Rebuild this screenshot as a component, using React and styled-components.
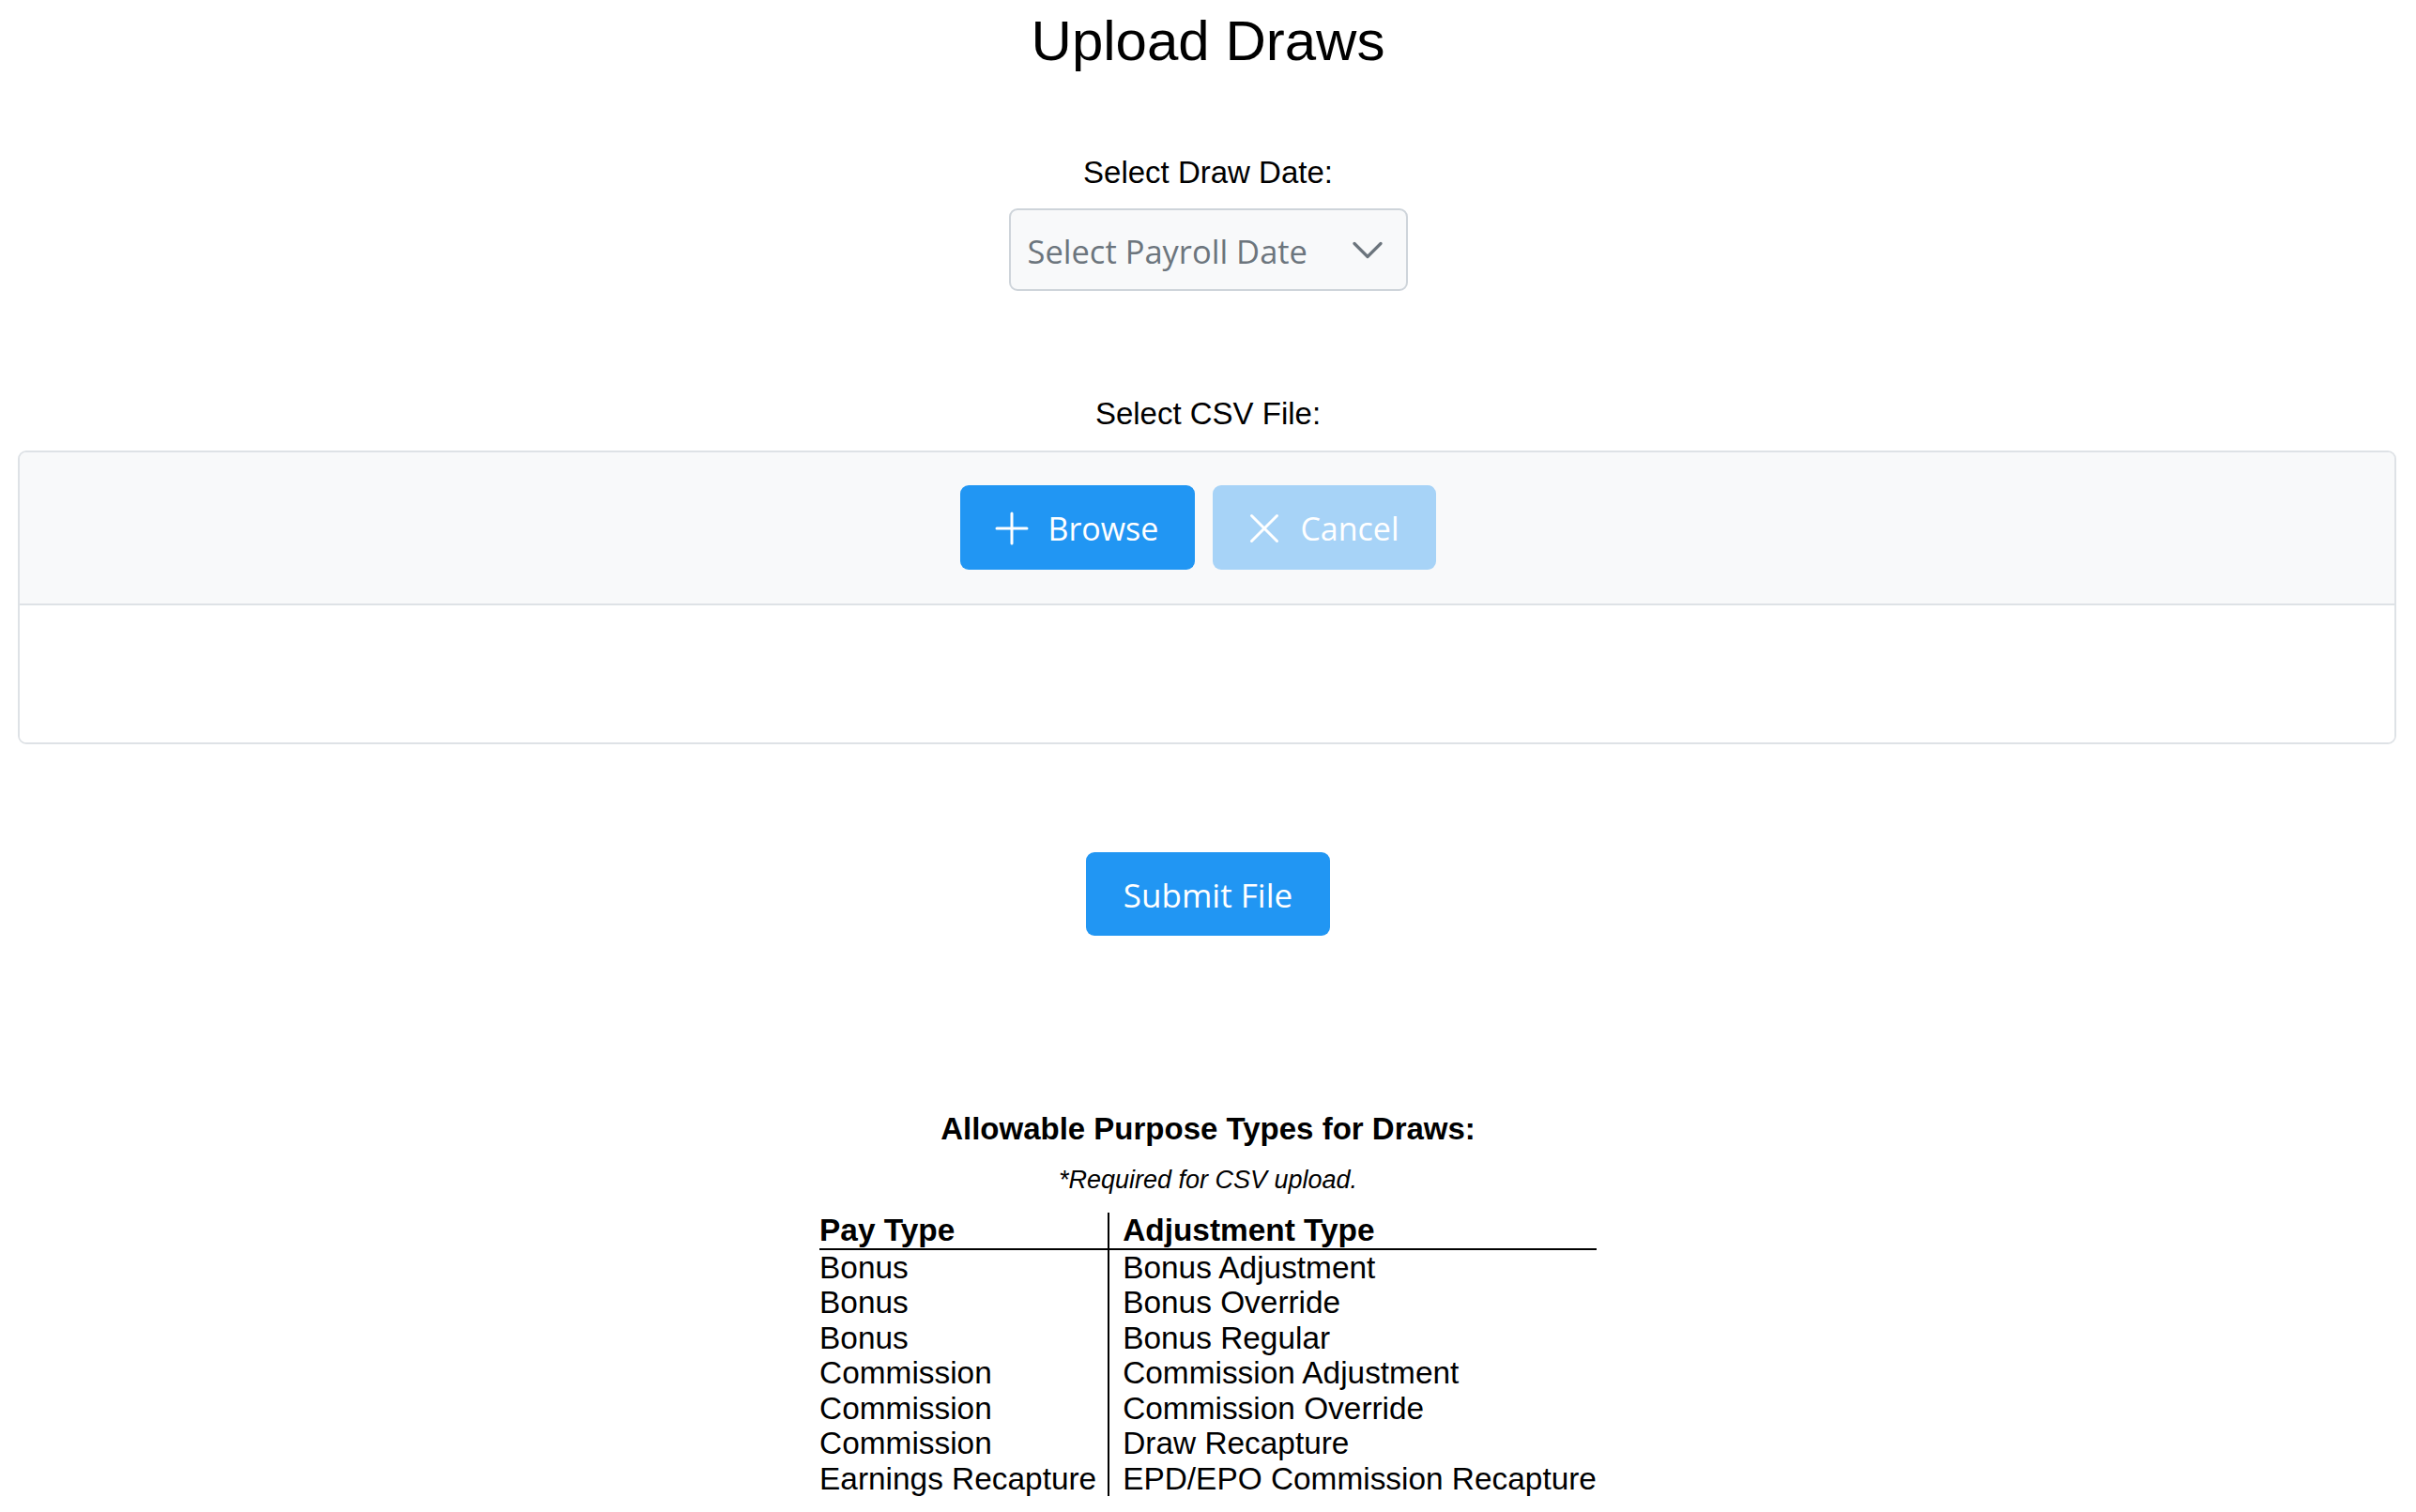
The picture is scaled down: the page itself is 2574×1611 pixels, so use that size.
import React from "react";
import styled, { createGlobalStyle } from "styled-components";

const GlobalStyle = createGlobalStyle`
  html, body {
    margin: 0;
    padding: 0;
    background: #fff;
  }
  body {
    font-family: "Liberation Sans", Arial, sans-serif;
    color: #000;
  }
  * {
    box-sizing: border-box;
  }
`;

const uiFont = `"Open Sans", "Noto Sans", sans-serif`;

const Page = styled.div`
  display: flex;
  flex-direction: column;
  align-items: center;
  padding-top: 9px;
  padding-bottom: 20px;
`;

const Title = styled.h1`
  margin: 0;
  font-size: 60px;
  line-height: 69px;
  font-weight: 400;
`;

const Label = styled.div`
  margin-top: ${(p) => p.top}px;
  font-size: 33px;
  line-height: 38px;
`;

const Dropdown = styled.div`
  margin-top: 19px;
  width: 425px;
  height: 88px;
  display: flex;
  align-items: center;
  justify-content: space-between;
  padding: 0 25px 0 18px;
  background: #f8f9fa;
  border: 2px solid #ced4da;
  border-radius: 9px;
  font-family: ${uiFont};
  font-size: 34.5px;
  color: #6c757d;
  cursor: pointer;

  span {
    padding-top: 2px;
  }
  svg {
    display: block;
  }
`;

const Panel = styled.div`
  margin-top: 20px;
  align-self: stretch;
  margin-left: 19px;
  margin-right: 21px;
  border: 2px solid #dee2e6;
  border-radius: 9px;
  overflow: hidden;
`;

const PanelHeader = styled.div`
  display: flex;
  justify-content: center;
  gap: 19px;
  padding: 35px 0 36px;
  background: #f8f9fa;
  border-bottom: 2px solid #dee2e6;
`;

const PanelBody = styled.div`
  height: 146px;
  background: #fff;
`;

const Button = styled.button`
  display: inline-flex;
  align-items: center;
  gap: 20px;
  height: 90px;
  padding: 2px ${(p) => (p.wide ? 40 : 39)}px 0 ${(p) => (p.wide ? 40 : 37)}px;
  margin: 0;
  border: none;
  border-radius: 9px;
  background: ${(p) => (p.disabled ? "#a7d3f7" : "#2196f3")};
  color: #fff;
  font-family: ${uiFont};
  font-size: ${(p) => (p.wide ? 35 : 34)}px;
  line-height: 1;
  cursor: ${(p) => (p.disabled ? "default" : "pointer")};

  svg {
    display: block;
    flex: none;
  }
`;

const Spacer = styled.span`
  width: 0;
`;

const SubmitButton = styled(Button)`
  margin-top: 115px;
  height: 89px;
`;

const Heading = styled.div`
  margin-top: 187px;
  font-size: 33px;
  line-height: 38px;
  font-weight: 700;
`;

const Note = styled.div`
  margin-top: 20px;
  font-size: 27px;
  line-height: 31px;
  font-style: italic;
`;

const Table = styled.table`
  margin-top: 19px;
  border-collapse: collapse;
  font-size: 33.4px;
  line-height: 37.5px;

  th,
  td {
    padding: 0;
    text-align: left;
    white-space: nowrap;
  }
  th {
    font-weight: 700;
    border-bottom: 2px solid #000;
  }
  th:first-child,
  td:first-child {
    padding-right: 12px;
    border-right: 2px solid #000;
  }
  th:last-child,
  td:last-child {
    padding-left: 14px;
  }
`;

const ChevronDown = () => (
  <svg width="32" height="19" viewBox="0 0 32 19" fill="none">
    <polyline
      points="2,2.5 16,16.5 30,2.5"
      stroke="#6c757d"
      strokeWidth="3.2"
      strokeLinecap="round"
      strokeLinejoin="round"
    />
  </svg>
);

const PlusIcon = () => (
  <svg width="36" height="36" viewBox="0 0 36 36" fill="none">
    <path
      d="M18 2 V34 M2 18 H34"
      stroke="#fff"
      strokeWidth="3"
      strokeLinecap="round"
    />
  </svg>
);

const TimesIcon = () => (
  <svg width="36" height="36" viewBox="0 0 36 36" fill="none">
    <path
      d="M4.5 4.5 L31.5 31.5 M31.5 4.5 L4.5 31.5"
      stroke="#fff"
      strokeWidth="3"
      strokeLinecap="round"
    />
  </svg>
);

const rows = [
  ["Bonus", "Bonus Adjustment"],
  ["Bonus", "Bonus Override"],
  ["Bonus", "Bonus Regular"],
  ["Commission", "Commission Adjustment"],
  ["Commission", "Commission Override"],
  ["Commission", "Draw Recapture"],
  ["Earnings Recapture", "EPD/EPO Commission Recapture"],
];

function App() {
  return (
    <>
      <GlobalStyle />
      <Page>
        <Title>Upload Draws</Title>

        <Label top={87}>Select Draw Date:</Label>
        <Dropdown>
          <span>Select Payroll Date</span>
          <ChevronDown />
        </Dropdown>

        <Label top={112}>Select CSV File:</Label>
        <Panel>
          <PanelHeader>
            <Button>
              <PlusIcon />
              Browse
            </Button>
            <Button disabled>
              <TimesIcon />
              Cancel
            </Button>
            <Spacer />
          </PanelHeader>
          <PanelBody />
        </Panel>

        <SubmitButton wide>Submit File</SubmitButton>

        <Heading>Allowable Purpose Types for Draws:</Heading>
        <Note>*Required for CSV upload.</Note>
        <Table>
          <thead>
            <tr>
              <th>Pay Type</th>
              <th>Adjustment Type</th>
            </tr>
          </thead>
          <tbody>
            {rows.map(([pay, adj], i) => (
              <tr key={i}>
                <td>{pay}</td>
                <td>{adj}</td>
              </tr>
            ))}
          </tbody>
        </Table>
      </Page>
    </>
  );
}

export default App;
